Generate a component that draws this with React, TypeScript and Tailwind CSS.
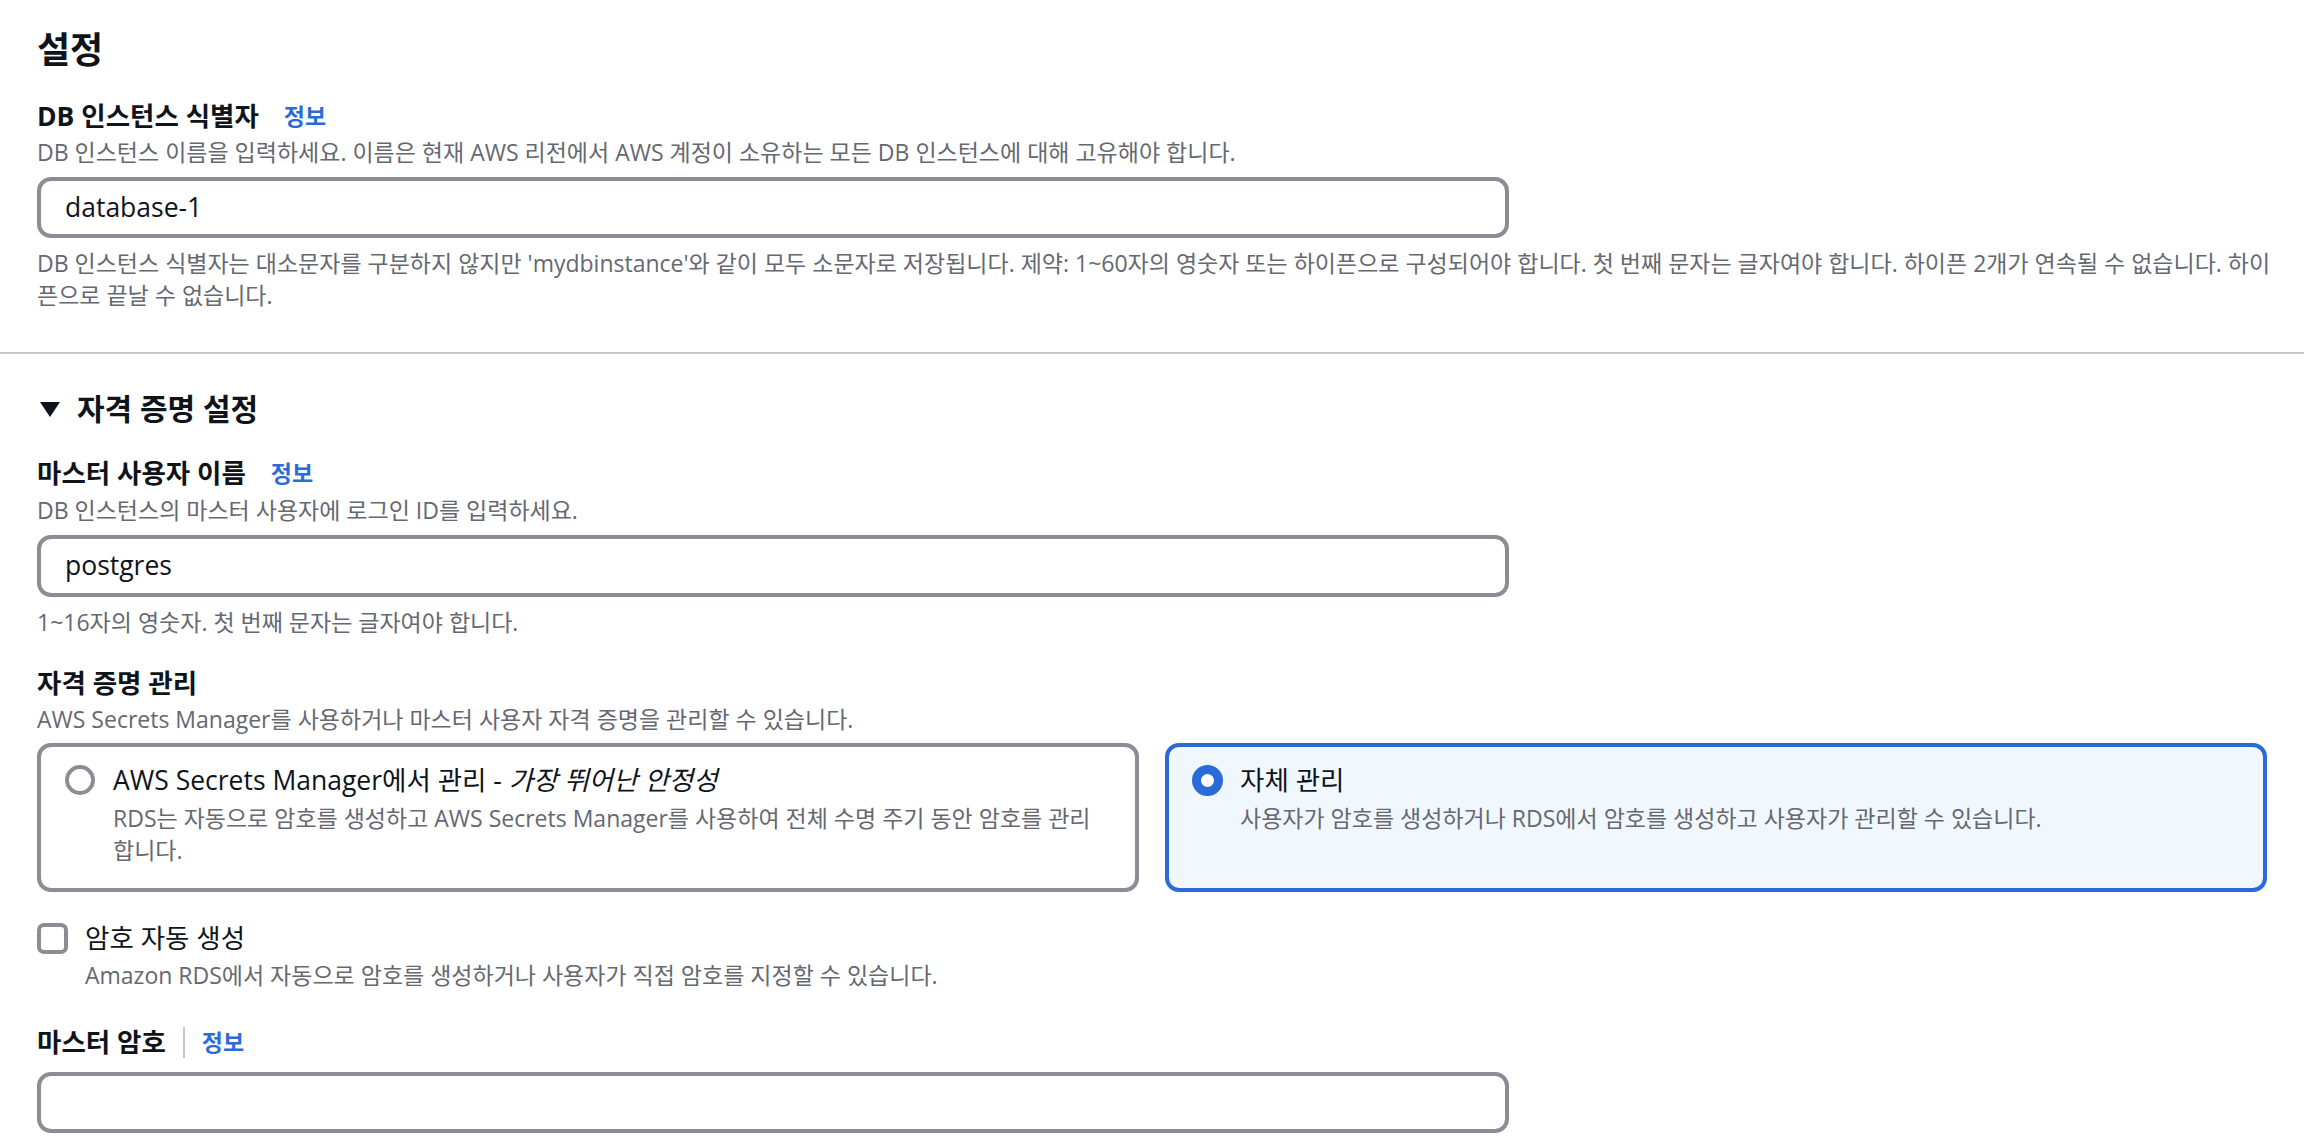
import React from "react";

function Info() {
  return (
    <span className="ml-[25px] text-[23px] font-bold leading-[32px] text-[#2b6bd8]">
      정보
    </span>
  );
}

function Label({ children }: { children: React.ReactNode }) {
  return (
    <span className="text-[26.5px] font-bold leading-[32px] text-[#0f141a]">
      {children}
    </span>
  );
}

export default function App() {
  return (
    <div className="w-full h-[1148px] overflow-hidden bg-white text-[#0f141a] font-[family-name:'Open_Sans','Noto_Sans_CJK_KR',sans-serif]">
      {/* Section 1 */}
      <div className="px-[37px] pt-[30px]">
        <h2 className="h-[40px] text-[36px] font-bold leading-[40px]">설정</h2>

        <div className="mt-[30px] flex h-[32px] items-center">
          <Label>DB 인스턴스 식별자</Label>
          <Info />
        </div>
        <p className="mt-[4px] text-[23px] leading-[32px] text-[#656871]">
          DB 인스턴스 이름을 입력하세요. 이름은 현재 AWS 리전에서 AWS 계정이 소유하는 모든 DB 인스턴스에 대해 고유해야 합니다.
        </p>
        <div className="mt-[9px] flex h-[61px] w-[1472px] items-center rounded-[14px] border-[4px] border-[#8c8c94] bg-white pl-[24px] text-[26.5px] text-[#0f141a]">
          database-1
        </div>
        <p className="mt-[9px] text-[23px] leading-[32px] text-[#656871]">
          <span className="whitespace-nowrap">
            DB 인스턴스 식별자는 대소문자를 구분하지 않지만 'mydbinstance'와 같이 모두 소문자로 저장됩니다. 제약: 1~60자의 영숫자 또는 하이픈으로 구성되어야 합니다. 첫 번째 문자는 글자여야 합니다. 하이픈 2개가 연속될 수 없습니다. 하이
          </span>
          <br />
          픈으로 끝날 수 없습니다.
        </p>
      </div>

      <div className="mt-[41px] h-[2px] w-full bg-[#c6c6cd]" />

      {/* Section 2 */}
      <div className="px-[37px] pt-[37px]">
        <div className="flex h-[36px] items-center">
          <svg width="20" height="15" viewBox="0 0 20 15" className="ml-[3px]">
            <polygon points="0,0 20,0 10,15" fill="#0f141a" />
          </svg>
          <span className="ml-[17px] text-[30px] font-bold leading-[36px]">자격 증명 설정</span>
        </div>

        <div className="mt-[30px] flex h-[32px] items-center">
          <Label>마스터 사용자 이름</Label>
          <Info />
        </div>
        <p className="mt-[5px] text-[23px] leading-[32px] text-[#656871]">
          DB 인스턴스의 마스터 사용자에 로그인 ID를 입력하세요.
        </p>
        <div className="mt-[9px] flex h-[62px] w-[1472px] items-center rounded-[14px] border-[4px] border-[#8c8c94] bg-white pl-[24px] text-[26.5px] text-[#0f141a]">
          postgres
        </div>
        <p className="mt-[9px] text-[23px] leading-[32px] text-[#656871]">
          1~16자의 영숫자. 첫 번째 문자는 글자여야 합니다.
        </p>

        <div className="mt-[29px] flex h-[32px] items-center">
          <Label>자격 증명 관리</Label>
        </div>
        <p className="mt-[4px] text-[23px] leading-[32px] text-[#656871]">
          AWS Secrets Manager를 사용하거나 마스터 사용자 자격 증명을 관리할 수 있습니다.
        </p>

        <div className="mt-[8px] grid grid-cols-2 gap-[26px]">
          <div className="flex gap-[18px] rounded-[14px] border-[4px] border-[#8c8c94] bg-white pb-[22px] pl-[24px] pr-[24px] pt-[15px]">
            <div className="flex h-[36px] shrink-0 items-center">
              <div className="h-[30px] w-[30px] rounded-full border-[4px] border-[#8c8c94] bg-white" />
            </div>
            <div>
              <div className="text-[26.5px] leading-[36px] text-[#0f141a]">
                AWS Secrets Manager에서 관리 - <i>가장 뛰어난 안정성</i>
              </div>
              <p className="mt-[4px] text-[23px] leading-[32px] text-[#656871]">
                <span className="whitespace-nowrap">
                  RDS는 자동으로 암호를 생성하고 AWS Secrets Manager를 사용하여 전체 수명 주기 동안 암호를 관리
                </span>
                <br />
                합니다.
              </p>
            </div>
          </div>

          <div className="flex gap-[17px] rounded-[14px] border-[4px] border-[#2b6bd8] bg-[#f1f8fd] pb-[22px] pl-[23px] pr-[24px] pt-[15px]">
            <div className="flex h-[36px] shrink-0 items-center">
              <div className="h-[31px] w-[31px] rounded-full border-[9px] border-[#2b6bd8] bg-white" />
            </div>
            <div>
              <div className="text-[26.5px] leading-[36px] text-[#0f141a]">자체 관리</div>
              <p className="mt-[4px] text-[23px] leading-[32px] text-[#656871]">
                사용자가 암호를 생성하거나 RDS에서 암호를 생성하고 사용자가 관리할 수 있습니다.
              </p>
            </div>
          </div>
        </div>

        <div className="mt-[30px] flex h-[32px] items-center gap-[17px]">
          <div className="h-[31px] w-[31px] rounded-[7px] border-[4px] border-[#8c8c94] bg-white" />
          <span className="text-[26.5px] leading-[32px] text-[#0f141a]">암호 자동 생성</span>
        </div>
        <p className="mt-[5px] pl-[48px] text-[23px] leading-[32px] text-[#656871]">
          Amazon RDS에서 자동으로 암호를 생성하거나 사용자가 직접 암호를 지정할 수 있습니다.
        </p>

        <div className="mt-[35px] flex h-[32px] items-center">
          <Label>마스터 암호</Label>
          <div className="ml-[17px] h-[31px] w-[2px] bg-[#c6c6cd]" />
          <span className="ml-[17px] text-[23px] font-bold leading-[32px] text-[#2b6bd8]">정보</span>
        </div>
        <div className="mt-[14px] h-[61px] w-[1472px] rounded-[14px] border-[4px] border-[#8c8c94] bg-white" />
      </div>
    </div>
  );
}
